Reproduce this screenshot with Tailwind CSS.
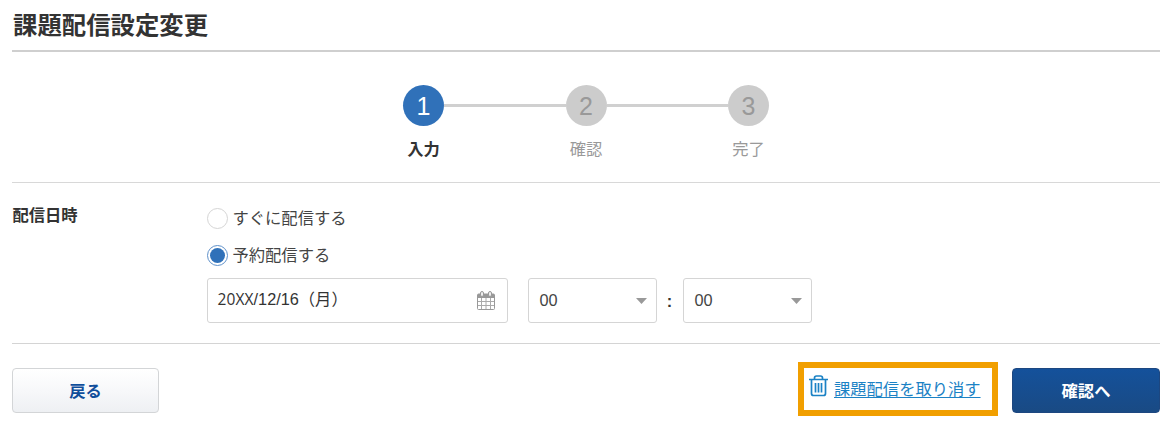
<!DOCTYPE html>
<html lang="ja">
<head>
    <meta charset="UTF-8">
    <meta name="viewport" content="width=device-width, initial-scale=1.0">
    <title>課題配信設定変更</title>
    <script src="https://cdn.jsdelivr.net/npm/@tailwindcss/browser@4"></script>
</head>
<body class="h-[426px] overflow-hidden bg-white px-3 font-['Liberation_Sans','Noto_Sans_CJK_JP',sans-serif] text-[16.3px] leading-6 text-[#333]">
    <!-- タイトル -->
    <header class="h-[52px] border-b-2 border-[#cfcfcf] pt-[10px]">
        <h1 class="pl-px text-[24.4px] leading-8 font-bold">課題配信設定変更</h1>
    </header>

    <!-- ステップ表示 -->
    <section class="flex h-[131px] items-start justify-center border-b border-[#d8d8d8] pt-[33px]">
        <div class="flex w-[41px] flex-col items-center gap-[11px]">
            <div class="flex size-[41px] items-center justify-center rounded-full bg-[#3071b9] text-[25px] text-white">1</div>
            <span class="whitespace-nowrap font-bold">入力</span>
        </div>
        <div class="mt-[19px] h-[3px] w-[121.5px] bg-[#d0d0d0]"></div>
        <div class="flex w-[41px] flex-col items-center gap-[11px] text-[#999]">
            <div class="flex size-[41px] items-center justify-center rounded-full bg-[#ccc] text-[25px]">2</div>
            <span class="whitespace-nowrap">確認</span>
        </div>
        <div class="mt-[19px] h-[3px] w-[121.5px] bg-[#d0d0d0]"></div>
        <div class="flex w-[41px] flex-col items-center gap-[11px] text-[#999]">
            <div class="flex size-[41px] items-center justify-center rounded-full bg-[#ccc] text-[25px]">3</div>
            <span class="whitespace-nowrap">完了</span>
        </div>
    </section>

    <!-- 配信日時 -->
    <section class="flex h-[161px] border-b border-[#d4d4d4]">
        <div class="w-[194.5px] shrink-0 pt-5 pl-[0.5px] font-bold">配信日時</div>
        <div class="pt-[23px]">
            <label class="flex h-6 items-center gap-[5px] text-[#444]">
                <span class="size-[21px] rounded-full border border-[#d5d5d5]"></span>
                すぐに配信する
            </label>
            <label class="mt-[13px] flex h-6 items-center gap-[5px] text-[#444]">
                <span class="flex size-[21px] items-center justify-center rounded-full border border-[#5f91ca]">
                    <span class="size-[15px] rounded-full bg-[#3071b9]"></span>
                </span>
                予約配信する
            </label>
            <div class="mt-[11px] flex items-center">
                <div class="flex h-[45px] w-[301.5px] items-center justify-between rounded-[3px] border border-[#d5d5d5] pl-[10px] pr-3">
                    <span class="-mt-1 flex items-center whitespace-nowrap"><span class="font-['Open_Sans',sans-serif] text-[15.5px] tracking-[0.1px]">20XX</span><span>/12/16（月）</span></span>
                    <svg class="h-[19px] w-[18px]" viewBox="0 0 18 19" fill="none">
                        <path d="M1.500 3h15q1 0 1 1v13.500q0 1-1 1h-15q-1 0-1-1V4q0-1 1-1Z" fill="#fff" stroke="#999"/>
                        <path d="M1 3h16v4H1Z" fill="#999"/>
                        <path d="M1 10.500h16M1 14.500h16M4.500 7v11M9 7v11M13.500 7v11" stroke="#aaa"/>
                        <rect x="3.500" y="0.500" width="3" height="5" rx="1.500" fill="#eee" stroke="#999"/>
                        <rect x="11.500" y="0.500" width="3" height="5" rx="1.500" fill="#eee" stroke="#999"/>
                    </svg>
                </div>
                <div class="ml-[19.5px] flex h-[45px] w-[129px] items-center justify-between rounded-[3px] border border-[#d5d5d5] pl-[11px] pr-[9px]">
                    <span class="-mt-0.5 text-[#444]">00</span>
                    <svg class="h-[6px] w-[11px]" viewBox="0 0 11 6"><path d="M0 0h11L5.500 6Z" fill="#999"/></svg>
                </div>
                <span class="w-[26px] text-center font-bold">:</span>
                <div class="flex h-[45px] w-[129px] items-center justify-between rounded-[3px] border border-[#d5d5d5] pl-[11px] pr-[9px]">
                    <span class="-mt-0.5 text-[#444]">00</span>
                    <svg class="h-[6px] w-[11px]" viewBox="0 0 11 6"><path d="M0 0h11L5.500 6Z" fill="#999"/></svg>
                </div>
            </div>
        </div>
    </section>

    <!-- ボタン -->
    <footer class="flex items-start pt-[18px]">
        <button class="mt-[6px] h-[45px] w-[147px] rounded-[4px] border border-[#d3d5d7] bg-linear-to-b from-white via-[#f7f8fa] to-[#eef0f3] font-bold text-[#104e9b]">戻る</button>
        <div class="ml-auto flex h-[54px] w-[200px] items-start border-6 border-[#f19f00] pt-[7px] pl-[5px]">
            <svg class="h-[22px] w-[19px] shrink-0" viewBox="0 0 19 22" fill="none" stroke="#1b82c5" stroke-width="1.700">
                <path d="M0 4.500h19M5.500 4.500V3q0-2 2-2h4q2 0 2 2v1.500M2.500 4.500v14q0 2 2 2h10q2 0 2-2v-14M6.500 8v9.500M9.500 8v9.500M12.500 8v9.500"/>
            </svg>
            <a href="#" class="mt-[2px] ml-[6px] whitespace-nowrap text-[#1b82c5] underline underline-offset-[2px]">課題配信を取り消す</a>
        </div>
        <button class="mt-[6px] ml-[14px] h-[45px] w-[148px] rounded-[4px] border border-[#1d4780] bg-linear-to-b from-[#14519b] to-[#194a84] font-bold text-white">確認へ</button>
    </footer>
</body>
</html>
